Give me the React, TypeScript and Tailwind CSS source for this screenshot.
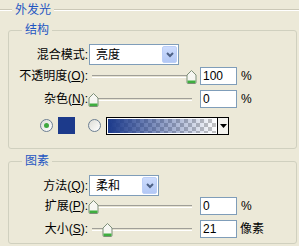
import React from "react";

const blue = "text-[#1f56c2]";

function Thumb() {
  return (
    <svg width="11" height="14" viewBox="0 0 11 14">
      <path d="M1 5 L5.5 0.5 L10 5 V12.5 Q10 13.5 9 13.5 H2 Q1 13.5 1 12.5 Z" fill="#f6f6f1" stroke="#7d8f78" />
      <rect x="1.5" y="10.5" width="8" height="2.5" fill="#3fae3f" />
    </svg>
  );
}

function Slider({ value, max }: { value: number; max: number }) {
  const left = Math.round((value / max) * 98);
  return (
    <div className="relative w-[109px] h-[18px]">
      <div className="absolute left-[4px] right-[5px] top-[8px] h-[3px] border-t border-[#a09f98] border-b border-b-white bg-[#e6e3d2]" />
      <div className="absolute top-[3px] leading-none" style={{ left }}>
        <Thumb />
      </div>
    </div>
  );
}

function NumInput({ value }: { value: string }) {
  return (
    <div className="ml-[3px] w-[37px] h-[18px] border border-[#7f9db9] bg-white pl-[2px] leading-[16px] text-[12px]">
      {value}
    </div>
  );
}

function Select({ value, width }: { value: string; width: string }) {
  return (
    <div className={`ml-[1px] ${width} h-[21px] flex items-center border border-[#7f9db9] bg-white`}>
      <span className="flex-1 pl-[6px]">{value}</span>
      <div className="w-[15px] h-[17px] mr-[1px] rounded-[2px] border border-[#bccff7] bg-[linear-gradient(#cddcfd,#b3c8f5)] flex items-center justify-center">
        <svg width="8" height="6" viewBox="0 0 8 6">
          <polyline points="1,1 4,4 7,1" fill="none" stroke="#4d6185" strokeWidth="2" />
        </svg>
      </div>
    </div>
  );
}

function Radio({ checked }: { checked?: boolean }) {
  return (
    <div className="w-[13px] h-[13px] rounded-full border border-[#6c7f92] bg-[linear-gradient(135deg,#dcdcd6,#ffffff)] flex items-center justify-center">
      {checked && <div className="w-[5px] h-[5px] rounded-full bg-[#3fa83f]" />}
    </div>
  );
}

function Label({ children }: { children: React.ReactNode }) {
  return <div className="w-[79px] text-right whitespace-nowrap">{children}</div>;
}

export default function App() {
  return (
    <div className="w-[299px] h-[246px] bg-[#ece9d8] overflow-hidden text-[12px] leading-[14px] text-black font-['Liberation_Sans','Noto_Sans_CJK_SC',sans-serif]">
      <div className="flex items-center h-[20px]">
        <div className="w-[12px] h-[2px] border-t border-[#cbc8b7] border-b border-b-white" />
        <span className={`px-[3px] ${blue}`}>外发光</span>
        <div className="flex-1 h-[2px] border-t border-[#cbc8b7] border-b border-b-white" />
      </div>

      <fieldset className="ml-[8px] mt-[3px] w-[289px] border border-[#d0d0bf] rounded-[3px] pb-[14px]">
        <legend className={`ml-[13px] px-[3px] ${blue}`}>结构</legend>
        <div className="flex items-center mt-[7px] h-[21px]">
          <Label>混合模式:</Label>
          <Select value="亮度" width="w-[90px]" />
        </div>
        <div className="flex items-center mt-[2px] h-[18px]">
          <Label>不透明度(<u>O</u>):</Label>
          <Slider value={100} max={100} />
          <NumInput value="100" />
          <span className="ml-[4px]">%</span>
        </div>
        <div className="flex items-center mt-[5px] h-[18px]">
          <Label>杂色(<u>N</u>):</Label>
          <Slider value={0} max={100} />
          <NumInput value="0" />
          <span className="ml-[4px]">%</span>
        </div>
        <div className="flex items-center mt-[9px] h-[17px] pl-[31px]">
          <Radio checked />
          <div className="ml-[5px] w-[17px] h-[17px] bg-[#1c3a8b]" />
          <div className="ml-[13px]">
            <Radio />
          </div>
          <div className="ml-[5px] w-[123px] h-[18px] border border-black flex">
            <div className="flex-1 border border-white bg-[image:linear-gradient(to_right,#1c3a8b,rgba(28,58,139,0)),repeating-conic-gradient(#c4c4c4_0_25%,#ffffff_0_50%)] bg-[length:100%_100%,8px_8px]" />
            <div className="w-[11px] border-l border-black bg-[#f4f3ee] flex items-center justify-center">
              <svg width="7" height="4" viewBox="0 0 7 4">
                <polygon points="0,0 7,0 3.5,4" fill="#000" />
              </svg>
            </div>
          </div>
        </div>
      </fieldset>

      <fieldset className="ml-[8px] mt-[5px] w-[289px] border border-[#d0d0bf] rounded-[3px] pb-[5px]">
        <legend className={`ml-[13px] px-[3px] ${blue}`}>图素</legend>
        <div className="flex items-center mt-[7px] h-[21px]">
          <Label>方法(<u>Q</u>):</Label>
          <Select value="柔和" width="w-[70px]" />
        </div>
        <div className="flex items-center mt-[1px] h-[18px]">
          <Label>扩展(<u>P</u>):</Label>
          <Slider value={0} max={100} />
          <NumInput value="0" />
          <span className="ml-[4px]">%</span>
        </div>
        <div className="flex items-center mt-[5px] h-[18px]">
          <Label>大小(<u>S</u>):</Label>
          <Slider value={21} max={150} />
          <NumInput value="21" />
          <span className="ml-[3px]">像素</span>
        </div>
      </fieldset>
    </div>
  );
}
